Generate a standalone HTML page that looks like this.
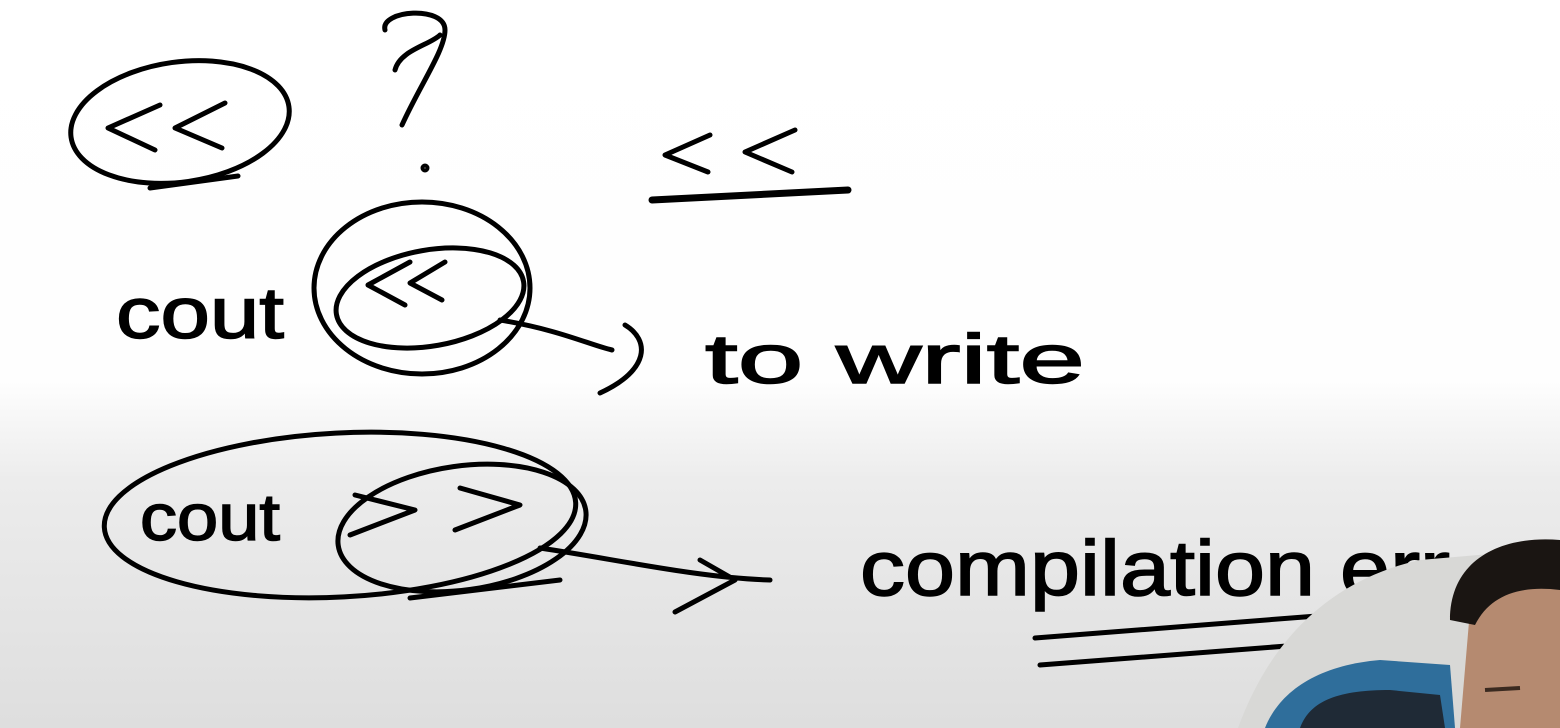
<!DOCTYPE html>
<html><head><style>
html,body{margin:0;padding:0}
body{width:1560px;height:728px;overflow:hidden;background:linear-gradient(#ffffff 0px,#fefefe 380px,#ececec 480px,#dedede 728px);font-family:"Liberation Sans",sans-serif}
svg{position:absolute;left:0;top:0}
</style></head><body>
<svg width="1560" height="728" viewBox="0 0 1560 728">
<g fill="none" stroke="#000" stroke-width="5" stroke-linecap="round" stroke-linejoin="round">
<ellipse cx="180" cy="122" rx="110" ry="60" transform="rotate(-8 180 122)"/>
<path d="M150 188 L238 176"/>
<path d="M160 105 L108 128 L155 150 M225 103 L175 128 L222 148"/>
<path d="M385 30 C380 10 445 5 445 30 C445 50 420 85 402 125 M395 70 C400 50 430 45 440 35"/>
<circle cx="425" cy="168" r="2"/>
<path d="M710 135 L665 155 L708 172 M795 130 L745 152 L792 172"/>
<path d="M652 200 L848 190" stroke-width="7"/>
<ellipse cx="422" cy="288" rx="108" ry="86"/>
<ellipse cx="430" cy="298" rx="95" ry="48" transform="rotate(-10 430 298)"/>
<path d="M410 262 L368 285 L405 305 M445 262 L410 283 L442 300"/>
<path d="M500 320 C560 330 590 345 612 350 M625 325 C650 340 650 370 600 393"/>
<ellipse cx="340" cy="515" rx="236" ry="82" transform="rotate(-3 340 515)"/>
<ellipse cx="462" cy="528" rx="125" ry="62" transform="rotate(-8 462 528)"/>
<path d="M410 598 L560 580"/>
<path d="M355 495 L415 510 L350 535 M460 488 L520 505 L455 530"/>
<path d="M540 548 C620 560 700 578 770 580 M700 560 L735 580 L675 612"/>
<path d="M1035 638 L1330 615 M1040 665 L1300 645"/>
</g>
<g font-family="Liberation Sans, sans-serif" fill="#000" stroke="#000" stroke-width="1.5">
<text x="116" y="338" font-size="72" textLength="168" lengthAdjust="spacingAndGlyphs">cout</text>
<text x="140" y="540" font-size="66" textLength="140" lengthAdjust="spacingAndGlyphs">cout</text>
<text x="705" y="383" font-size="70" textLength="380" lengthAdjust="spacingAndGlyphs">to write</text>
<text x="860" y="595" font-size="78" textLength="590" lengthAdjust="spacingAndGlyphs">compilation err</text>
</g>
<g>
<path d="M1238 728 C1270 640 1330 580 1420 560 L1560 548 L1560 728 Z" fill="#d8d8d6"/>
<path d="M1265 728 C1280 690 1320 665 1380 660 L1450 665 L1455 728 Z" fill="#2f6e9b"/>
<path d="M1300 728 C1310 700 1340 690 1390 690 L1440 695 L1445 728 Z" fill="#1f2a36"/>
<path d="M1460 728 L1470 610 C1480 570 1530 560 1560 570 L1560 728 Z" fill="#b58a70"/>
<path d="M1450 620 C1450 560 1500 535 1560 540 L1560 590 C1520 585 1490 595 1475 625 Z" fill="#1a1512"/>
<path d="M1485 690 L1520 688" stroke="#3a2a20" stroke-width="4"/>
</g>
</svg>
</body></html>
